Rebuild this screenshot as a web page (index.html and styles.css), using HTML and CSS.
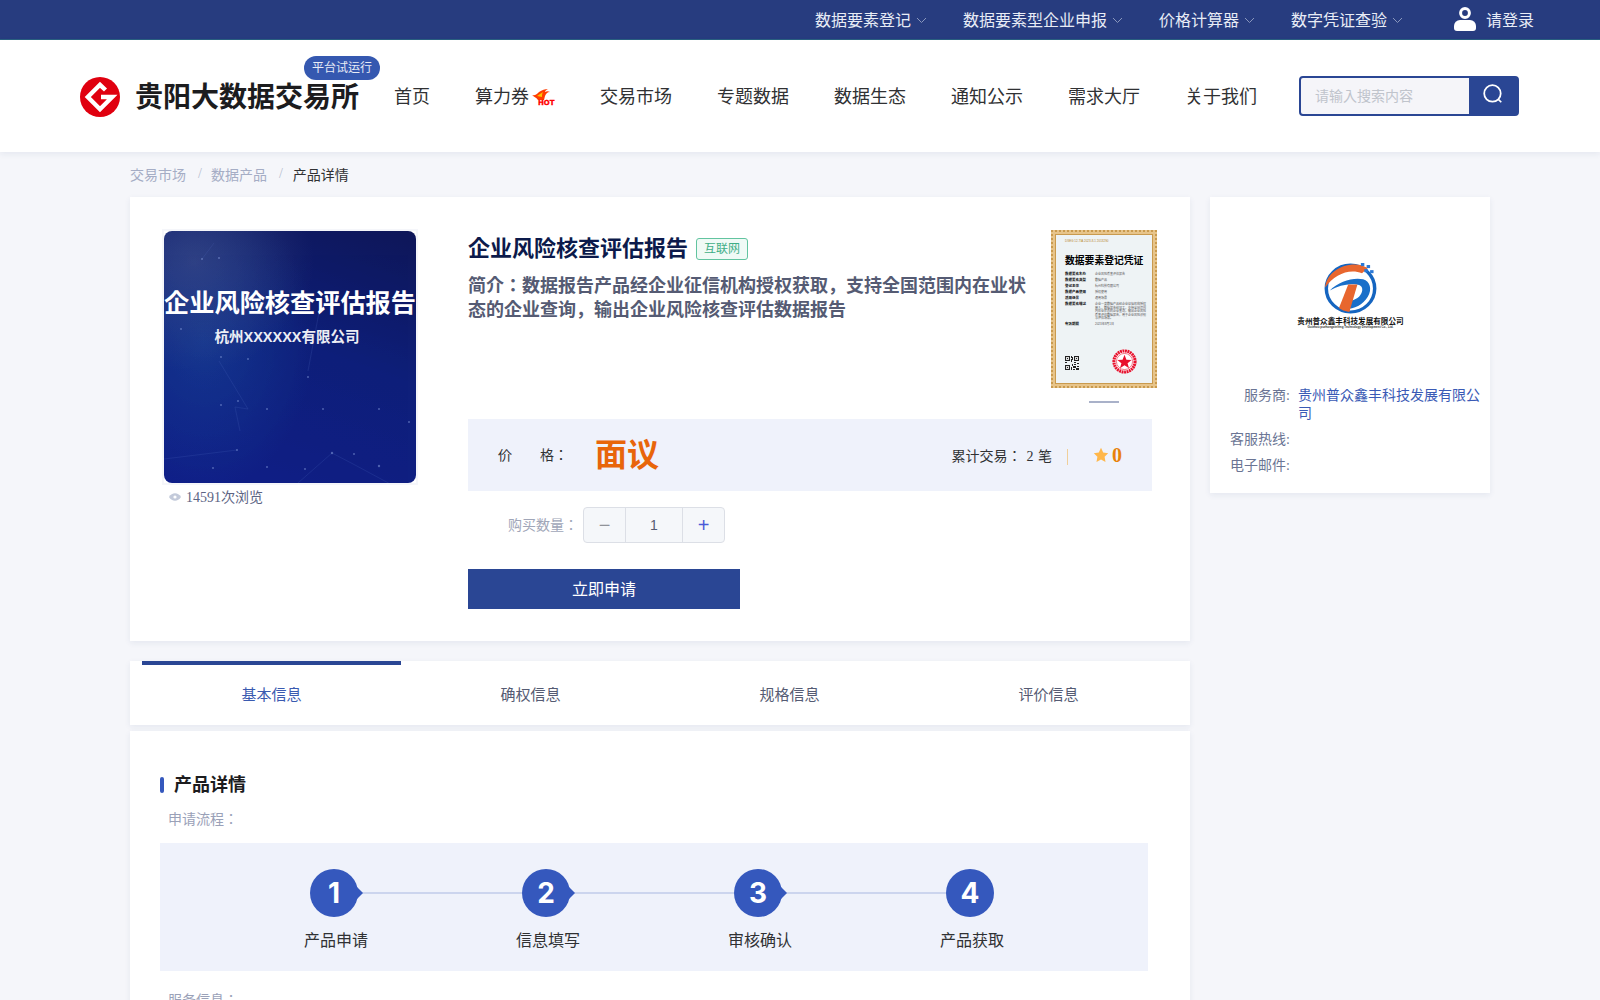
FILE: index.html
```html
<!DOCTYPE html>
<html lang="en">

<head>
    <meta charset="UTF-8">
    <title>企业风险核查评估报告 - 贵阳大数据交易所</title>
    <link rel="stylesheet" href="styles.css">
</head>

<body>

    <!-- 顶部栏 -->
    <div class="topbar">
        <a class="top-item">数据要素登记<svg class="chevron" viewBox="0 0 11 6"><path d="M1 1l4.5 4.5L10 1"/></svg></a>
        <a class="top-item">数据要素型企业申报<svg class="chevron" viewBox="0 0 11 6"><path d="M1 1l4.5 4.5L10 1"/></svg></a>
        <a class="top-item">价格计算器<svg class="chevron" viewBox="0 0 11 6"><path d="M1 1l4.5 4.5L10 1"/></svg></a>
        <a class="top-item">数字凭证查验<svg class="chevron" viewBox="0 0 11 6"><path d="M1 1l4.5 4.5L10 1"/></svg></a>
        <a class="top-login">
            <svg class="user-icon" viewBox="0 0 22 24">
                <circle cx="11" cy="6" r="4.4" fill="none" stroke="#fff" stroke-width="3"/>
                <path d="M0 19a6 6 0 0 1 6-6h10a6 6 0 0 1 6 6v2a3 3 0 0 1-3 3H3a3 3 0 0 1-3-3z" fill="#fff"/>
            </svg>
            请登录
        </a>
    </div>

    <!-- 导航 -->
    <header class="header">
        <svg class="logo" viewBox="0 0 40 40">
            <circle cx="20" cy="20" r="20" fill="#e0000f"/>
            <path d="M25.500 13L20 7.800 7.800 20 20 32.200 32.200 20H21" fill="none" stroke="#fff" stroke-width="4.400"/>
        </svg>
        <div class="brand">贵阳大数据交易所<span class="badge">平台试运行</span></div>
        <nav class="nav">
            <a>首页</a>
            <a class="nav-hot">算力券
                <span class="hot">
                    <svg viewBox="0 0 18 11"><path d="M0 6c3 1 5-1 7-3 3-2 6-3 9-3-2 1-3 2-3 3 2-1 3-1 5 0-3 0-4 2-5 4l-1 4H6C4 8 2 8 0 6z" fill="#ff3c00"/><path d="M5 7c2-1 4-3 6-4-1 2-1 3-1 5z" fill="#ffc400"/></svg>
                    <b>HOT</b>
                </span>
            </a>
            <a>交易市场</a>
            <a>专题数据</a>
            <a>数据生态</a>
            <a>通知公示</a>
            <a>需求大厅</a>
            <a>关于我们</a>
        </nav>
        <div class="search">
            <div class="search-input">请输入搜索内容</div>
            <div class="search-btn">
                <svg viewBox="0 0 20 20"><circle cx="9.500" cy="9.500" r="7.500"/><path d="M15 15l2.500 2.500"/></svg>
            </div>
        </div>
    </header>

    <div class="wrap">
        <div class="crumbs">
            <a>交易市场</a><i>/</i><a>数据产品</a><i>/</i><span>产品详情</span>
        </div>

        <div class="columns">
            <div class="main-col">

                <!-- 产品信息 -->
                <section class="product card">
                    <div class="cover-col">
                        <div class="cover">
                            <div class="cover-img">
                                <svg class="cover-net" viewBox="0 0 252 252">
                                    <g stroke="#4f6bc0" stroke-width=".5" opacity=".4" fill="none">
                                        <path d="M55 130L84 178 71 176 76 200"/>
                                        <path d="M0 228l73-9"/>
                                        <path d="M134 252l34-30 23 12 52 28"/>
                                        <path d="M144 140l12-64"/>
                                        <path d="M50 12l-12 16"/>
                                    </g>
                                    <g fill="#8da3e0" opacity=".5">
                                        <circle cx="38" cy="28" r="1"/><circle cx="55" cy="27" r="1"/><circle cx="17" cy="98" r="1"/>
                                        <circle cx="57" cy="126" r="1"/><circle cx="84" cy="128" r="1"/><circle cx="144" cy="146" r="1"/>
                                        <circle cx="57" cy="174" r="1"/><circle cx="74" cy="170" r="1"/><circle cx="103" cy="178" r="1"/>
                                        <circle cx="159" cy="178" r="1"/><circle cx="215" cy="178" r="1"/><circle cx="245" cy="191" r="1"/>
                                        <circle cx="73" cy="219" r="1"/><circle cx="168" cy="222" r="1.200"/><circle cx="190" cy="223" r="1"/>
                                        <circle cx="215" cy="235" r="1.200"/><circle cx="141" cy="238" r="1"/><circle cx="103" cy="236" r="1"/>
                                        <circle cx="49" cy="237" r="1"/>
                                    </g>
                                </svg>
                                <div class="cover-title">企业风险核查评估报告</div>
                                <div class="cover-sub">杭州XXXXXX有限公司</div>
                            </div>
                        </div>
                        <div class="views">
                            <svg viewBox="0 0 12 8"><path d="M0 4c3-5 9-5 12 0-3 5-9 5-12 0z" fill="#c3cada"/><circle cx="6" cy="4" r="1.600" fill="#fff"/></svg>
                            14591次浏览
                        </div>
                    </div>

                    <div class="info-col">
                        <div class="info-top">
                            <div class="info-text">
                                <div class="title-row">
                                    <h1>企业风险核查评估报告</h1>
                                    <span class="tag">互联网</span>
                                </div>
                                <p class="desc">简介：数据报告产品经企业征信机构授权获取，支持全国范围内在业状态的企业查询，输出企业风险核查评估数据报告</p>
                            </div>
                            <div class="cert-col">
                                <div class="cert">
                                    <div class="cert-in">
                                        <div class="cert-no">DSEG 12-TIA 2023-8-1 2013290</div>
                                        <div class="cert-title">数据要素登记凭证</div>
                                        <div class="cert-row"><b>数据要素名称</b><span>企业风险核查评估报告</span></div>
                                        <div class="cert-row"><b>数据要素类型</b><span>数据产品</span></div>
                                        <div class="cert-row"><b>登记主体</b><span>杭州科技有限公司</span></div>
                                        <div class="cert-row"><b>数据产品使用</b><span>授权使用</span></div>
                                        <div class="cert-row"><b>适用场景</b><span>通用场景</span></div>
                                        <div class="cert-row"><b>数据要素描述</b><span>企业一类数据产品经企业征信机构授权接入，数据报告经加工，支持全国范围内在业状态的企业查询，输出企业风险核查评估数据报告，用于企业风险识别与评估场景。</span></div>
                                        <div class="cert-row"><b>有效期限</b><span>2023年8月1日</span></div>
                                        <div class="cert-foot">
                                            <svg class="cert-qr" viewBox="0 0 15 15" shape-rendering="crispEdges">
                                                <path d="M0 0h5v5H0zM10 0h5v5h-5zM0 10h5v5H0zM6 0h1v2H6zM8 1h1v3H8zM6 3h1v3H6zM6 7h3v1H6zM0 6h2v1H0zM3 7h2v1H3zM10 6h2v2h-2zM13 7h2v2h-2zM7 9h2v2H7zM10 9h2v1h-2zM6 12h2v3H6zM9 11h3v2H9zM13 11h2v1h-2zM9 14h2v1H9zM12 13h3v2h-3z" fill="#222"/>
                                                <path d="M1 1h3v3H1zM11 1h3v3h-3zM1 11h3v3H1z" fill="#ddd"/>
                                                <path d="M2 2h1v1H2zM12 2h1v1h-1zM2 12h1v1H2z" fill="#222"/>
                                            </svg>
                                            <svg class="cert-stamp" viewBox="0 0 26 26">
                                                <circle cx="13" cy="13" r="11" fill="#fff" stroke="#e8112d" stroke-width="3.200" stroke-dasharray="2 .6"/>
                                                <circle cx="13" cy="13" r="8.400" fill="none" stroke="#e8112d" stroke-width=".6"/>
                                                <path d="M13 6l2 5.200 5.400.2-4.200 3.400 1.500 5.200L13 17l-4.700 3 1.500-5.200-4.200-3.400 5.400-.2z" fill="#e8112d"/>
                                            </svg>
                                        </div>
                                    </div>
                                </div>
                                <div class="cert-dash"></div>
                            </div>
                        </div>

                        <div class="price-bar">
                            <div class="price-label"><span>价</span><span>格：</span></div>
                            <div class="price">面议</div>
                            <div class="stats">
                                累计交易：<span class="deal">2 笔</span>
                                <i class="sep"></i>
                                <svg class="star" viewBox="0 0 16 16"><path d="M8 .8l2.200 4.700 5 .7-3.600 3.600.9 5.200L8 12.500 3.500 15l.9-5.200L.8 6.200l5-.7z" fill="#ffb74a"/></svg>
                                <b class="score">0</b>
                            </div>
                        </div>

                        <div class="qty-row">
                            <span class="qty-label">购买数量：</span>
                            <div class="stepper">
                                <span class="step-btn minus">−</span>
                                <span class="step-val">1</span>
                                <span class="step-btn plus">+</span>
                            </div>
                        </div>

                        <button class="apply">立即申请</button>
                    </div>
                </section>

                <!-- 标签页 -->
                <div class="tabs card">
                    <a class="tab active">基本信息</a>
                    <a class="tab">确权信息</a>
                    <a class="tab">规格信息</a>
                    <a class="tab">评价信息</a>
                </div>

                <!-- 产品详情 -->
                <section class="detail card">
                    <h2>产品详情</h2>
                    <div class="field-label">申请流程：</div>
                    <div class="flow">
                        <div class="step"><span class="num">1</span><span class="step-name">产品申请</span></div>
                        <div class="step"><span class="num">2</span><span class="step-name">信息填写</span></div>
                        <div class="step"><span class="num">3</span><span class="step-name">审核确认</span></div>
                        <div class="step"><span class="num">4</span><span class="step-name">产品获取</span></div>
                    </div>
                    <div class="field-label service">服务信息：</div>
                </section>
            </div>

            <!-- 服务商 -->
            <aside class="side card">
                <div class="vendor-logo">
                    <svg viewBox="0 0 46 50" preserveAspectRatio="none">
                        <ellipse cx="23" cy="25" rx="21" ry="23" fill="none" stroke="#1565c0" stroke-width="3"/>
                        <path d="M1 24C2 10 16-1 32 2l6 3-5 5C22 5 9 11 1 24z" fill="#e8662e"/>
                        <path d="M5 27c8-9 20-13 29-11 6 2 8 10 4 17-4 8-12 12-19 12l3-8c5 0 10-4 11-9 1-4-1-7-5-7-8-1-15 1-23 6z" fill="#1a6fc9"/>
                        <path d="M21 21h8l-7 27c-4-1-7-2-9-4z" fill="#e8662e"/>
                        <g fill="#2a78d6"><rect x="32" y="0" width="3" height="3"/><rect x="37" y="2" width="3" height="3"/><rect x="35" y="6" width="3" height="3"/><rect x="40" y="7" width="3" height="3"/></g>
                    </svg>
                    <div class="vendor-cn">贵州普众鑫丰科技发展有限公司</div>
                    <div class="vendor-en">Guizhou puzhongxinfeng Technology Development Co., Ltd.</div>
                </div>
                <dl class="vendor-info">
                    <dt>服务商:</dt><dd class="link">贵州普众鑫丰科技发展有限公司</dd>
                    <dt>客服热线:</dt><dd></dd>
                    <dt>电子邮件:</dt><dd></dd>
                </dl>
            </aside>
        </div>
    </div>

</body>

</html>
```

FILE: styles.css
```css
* {
    box-sizing: border-box;
}

body {
    margin: 0;
    background-color: #f5f6fa;
    color: #303133;
    font-family: "Liberation Serif", "Noto Sans CJK JP", serif;
    font-size: 14px;
}

h1,
h2,
p,
dl,
dd {
    margin: 0;
}

.card {
    background-color: #fff;
    box-shadow: 0 2px 6px rgba(40, 60, 120, 0.08);
}

/* 顶部栏 */
.topbar {
    height: 40px;
    padding-right: 66px;
    padding-bottom: 1px;
    display: flex;
    justify-content: flex-end;
    align-items: center;
    background-color: #273c7f;
    border-bottom: 1px solid #2a6080;
    color: #fff;
    font-size: 16px;
}

.top-item {
    display: flex;
    align-items: center;
    margin-right: 36px;
    color: #e8ecf6;
}

.chevron {
    width: 11px;
    height: 6px;
    margin-left: 5px;
    margin-top: 2px;
    fill: none;
    stroke: #8a97bd;
    stroke-width: 1;
}

.top-login {
    display: flex;
    align-items: center;
    margin-left: 15px;
    color: #e8ecf6;
}

.user-icon {
    width: 22px;
    height: 24px;
    margin-right: 10px;
}

/* 导航 */
.header {
    height: 112px;
    padding-left: 80px;
    display: flex;
    align-items: center;
    background-color: #fff;
    box-shadow: 0 2px 6px rgba(40, 60, 120, 0.08);
    position: relative;
}

.logo {
    width: 40px;
    height: 40px;
    margin-top: 2px;
}

.brand {
    position: relative;
    margin-left: 15px;
    font-size: 28px;
    font-weight: bold;
    color: #1c1c1e;
    line-height: 40px;
    margin-top: 3px;
}

.badge {
    position: absolute;
    left: 169px;
    top: -22px;
    width: 76px;
    height: 24px;
    border-radius: 12px;
    background-color: #3558b0;
    color: #e8ecf6;
    font-size: 12px;
    font-weight: normal;
    line-height: 24px;
    text-align: center;
}

.nav {
    display: flex;
    gap: 45px;
    margin-left: 35px;
    margin-top: -2px;
    font-size: 18px;
    color: #303133;
}

.nav-hot {
    display: flex;
    align-items: center;
}

.hot {
    position: relative;
    width: 26px;
    height: 20px;
}

.hot svg {
    position: absolute;
    left: 3px;
    top: 4px;
    width: 18px;
    height: 11px;
}

.hot b {
    position: absolute;
    left: 9px;
    top: 14px;
    color: #f00;
    font-family: "DejaVu Sans", sans-serif;
    font-size: 7px;
    line-height: 8px;
    -webkit-text-stroke: 0.3px #f00;
}

.search {
    display: flex;
    width: 220px;
    height: 40px;
    margin-left: 42px;
    border: 2px solid #2a4694;
    border-radius: 4px;
    background-color: #2a4694;
    overflow: hidden;
}

.search-input {
    flex: 1;
    padding-left: 14px;
    background-color: #f5f5f9;
    color: #c0c4cc;
    line-height: 38px;
}

.search-btn {
    width: 48px;
    display: flex;
    justify-content: center;
    align-items: center;
}

.search-btn svg {
    width: 22px;
    height: 22px;
    margin-top: -5px;
    fill: none;
    stroke: #fff;
    stroke-width: 1.600;
}

/* 内容 */
.wrap {
    width: 1360px;
    margin-left: 130px;
}

.crumbs {
    height: 45px;
    padding-bottom: 2px;
    display: flex;
    align-items: center;
    color: #a5adc5;
}

.crumbs i {
    margin: 0 9px 0 12px;
    font-style: normal;
    color: #b8bed0;
}

.crumbs span {
    margin-left: 1px;
    color: #303133;
}

.columns {
    display: flex;
    align-items: flex-start;
    gap: 20px;
}

.main-col {
    width: 1060px;
}

/* 产品信息 */
.product {
    display: flex;
    height: 444px;
    padding: 32px;
}

.cover-col {
    width: 256px;
    margin-right: 50px;
}

.cover {
    width: 256px;
    height: 256px;
    border: 2px solid #f5f6fa;
}

.cover-img {
    position: relative;
    height: 100%;
    padding-top: 57px;
    border-radius: 8px;
    overflow: hidden;
    background:
        radial-gradient(ellipse 120px 110px at 30px 30px, rgba(70, 85, 140, 0.55), transparent),
        radial-gradient(ellipse 110px 150px at 40px 110px, rgba(30, 90, 170, 0.4), transparent),
        linear-gradient(200deg, #0e1658 0%, #0e1f7a 45%, #101f88 100%);
    color: #fff;
    text-align: center;
    font-family: "Liberation Sans", "Noto Sans CJK JP", sans-serif;
    font-weight: bold;
}

.cover-net {
    position: absolute;
    left: 0;
    top: 0;
    width: 100%;
    height: 100%;
}

.cover-title {
    position: relative;
    font-size: 25.200px;
    line-height: 30px;
    white-space: nowrap;
}

.cover-sub {
    position: relative;
    margin-top: 9px;
    padding-right: 6px;
    font-size: 14.500px;
    line-height: 20px;
    opacity: 0.92;
}

.views {
    height: 22px;
    padding-left: 7px;
    display: flex;
    align-items: center;
    color: #5c6483;
}

.views svg {
    width: 12px;
    height: 8px;
    margin-right: 5px;
    margin-top: 2px;
}

.info-col {
    width: 689px;
}

.info-top {
    display: flex;
    height: 190px;
}

.info-text {
    width: 558px;
}

.title-row {
    display: flex;
    align-items: center;
    height: 40px;
}

h1 {
    font-size: 22px;
    line-height: 38px;
    color: #0c1a4b;
}

.tag {
    margin-left: 8px;
    padding: 0 7px;
    height: 22px;
    border: 1px solid #62c4a0;
    border-radius: 3px;
    background-color: #f0faf6;
    color: #3fae86;
    font-size: 12px;
    line-height: 20px;
}

.desc {
    margin-top: 5px;
    font-size: 18px;
    font-weight: bold;
    line-height: 24px;
    color: #555b73;
}

.cert-col {
    width: 106px;
    margin-left: 25px;
    margin-top: 1px;
}

.cert {
    width: 106px;
    height: 158px;
    padding: 2px;
    border: 2px dotted #c99a4e;
    background-color: #e7c48a;
}

.cert-in {
    height: 100%;
    padding: 4px 6px 0 9px;
    border: 1px solid #c99a4e;
    background-color: #eef3f5;
    color: #222;
    font-family: "Liberation Sans", "Noto Sans CJK JP", sans-serif;
}

.cert-no {
    font-size: 3px;
    line-height: 4px;
    color: #b8862f;
}

.cert-title {
    margin: 12px 0 7px 0;
    font-size: 9.800px;
    font-weight: bold;
    line-height: 11px;
    white-space: nowrap;
    color: #000;
}

.cert-row {
    display: flex;
    margin-bottom: 2.400px;
    font-size: 3px;
    line-height: 3.600px;
    color: #555;
}

.cert-row b {
    flex: none;
    width: 30px;
    color: #111;
    font-size: 3.500px;
}

.cert-foot {
    display: flex;
    justify-content: space-between;
    align-items: flex-end;
    margin-top: 22px;
    padding-right: 9px;
}

.cert-qr {
    width: 14px;
    height: 14px;
    margin-bottom: 4px;
}

.cert-stamp {
    width: 25px;
    height: 25px;
}

.cert-dash {
    width: 30px;
    height: 2px;
    margin: 13px 0 0 38px;
    background-color: #a9b1c9;
}

.price-bar {
    display: flex;
    align-items: center;
    width: 684px;
    height: 72px;
    padding: 0 30px 0 30px;
    background-color: #eff2fb;
}

.price-label {
    display: flex;
    justify-content: space-between;
    width: 70px;
    margin-right: 27px;
    margin-top: -3px;
}

.price {
    font-size: 32px;
    font-weight: bold;
    color: #e8650a;
    line-height: 40px;
}

.stats {
    display: flex;
    align-items: center;
    margin-left: auto;
}

.deal {
    margin-left: 5px;
    word-spacing: 1px;
}

.sep {
    width: 1px;
    height: 16px;
    margin: 4px 25px 0 15px;
    background-color: #f0cf9a;
}

.star {
    width: 16px;
    height: 16px;
}

.score {
    margin-left: 3px;
    font-size: 20px;
    color: #e8820a;
}

.qty-row {
    display: flex;
    align-items: center;
    margin-top: 16px;
    padding-left: 40px;
}

.qty-label {
    margin-top: -2px;
    color: #a0a6b8;
}

.stepper {
    display: flex;
    width: 142px;
    height: 36px;
    margin-left: 5px;
    border: 1px solid #dcdfe6;
    border-radius: 4px;
    background-color: #f5f7fa;
    font-family: "Liberation Sans", sans-serif;
    line-height: 34px;
    text-align: center;
}

.step-btn {
    width: 41px;
    font-size: 20px;
}

.minus {
    color: #909399;
}

.plus {
    color: #4a5bd8;
}

.step-val {
    flex: 1;
    border-left: 1px solid #dcdfe6;
    border-right: 1px solid #dcdfe6;
    color: #555b73;
}

.apply {
    display: block;
    width: 272px;
    height: 40px;
    margin-top: 26px;
    padding-bottom: 3px;
    border: none;
    background-color: #2a4694;
    color: #fff;
    font-family: inherit;
    font-size: 16px;
}

/* 标签页 */
.tabs {
    display: flex;
    height: 64px;
    margin-top: 20px;
    padding: 0 12px;
}

.tab {
    width: 259px;
    border-top: 4px solid transparent;
    color: #555b73;
    font-size: 15px;
    line-height: 60px;
    text-align: center;
}

.tab.active {
    border-top-color: #2a4694;
    color: #3a5ab0;
}

/* 产品详情 */
.detail {
    margin-top: 6px;
    padding: 41px 30px 0;
    height: 300px;
    overflow: hidden;
}

h2 {
    display: flex;
    align-items: center;
    font-size: 18px;
    line-height: 26px;
    color: #1c1c1e;
}

h2::before {
    content: "";
    width: 4px;
    height: 16px;
    margin-right: 10px;
    border-radius: 2px;
    background-color: #3558bd;
}

.field-label {
    margin-top: 12px;
    padding-left: 8px;
    color: #9aa1b8;
    line-height: 20px;
}

.field-label.service {
    margin-top: 20px;
}

.flow {
    display: flex;
    width: 988px;
    height: 128px;
    margin-top: 13px;
    padding: 26px 0 0 68px;
    background-color: #eff2fb;
}

.step {
    position: relative;
    width: 212px;
    display: flex;
    flex-direction: column;
    align-items: center;
}

.num {
    width: 48px;
    height: 48px;
    border-radius: 50%;
    background-color: #3558bd;
    color: #fff;
    font-family: "Inter", sans-serif;
    font-size: 28px;
    font-weight: 700;
    line-height: 48px;
    text-align: center;
}

/* 圆圈右侧的小箭头和连接线 */
.step:not(:last-child) .num::before {
    content: "";
    position: absolute;
    z-index: 1;
    left: 129px;
    top: 18px;
    border-left: 6px solid #3558bd;
    border-top: 6px solid transparent;
    border-bottom: 6px solid transparent;
}

.step:not(:last-child)::after {
    content: "";
    position: absolute;
    left: 130px;
    top: 23px;
    width: 164px;
    height: 2px;
    background-color: #ccd5ee;
}

.step-name {
    margin-top: 12px;
    padding-left: 4px;
    font-size: 16px;
    line-height: 24px;
    color: #303133;
}

/* 服务商 */
.side {
    width: 280px;
    height: 296px;
    padding: 66px 10px 0 0;
}

.vendor-logo {
    height: 124px;
    margin-left: 87px;
    width: 107px;
    text-align: center;
    font-family: "Liberation Sans", "Noto Sans CJK JP", sans-serif;
}

.vendor-logo svg {
    display: block;
    width: 53px;
    height: 51px;
    margin: 0 auto 4px;
}

.vendor-cn {
    font-size: 7.600px;
    font-weight: bold;
    line-height: 8px;
    color: #111;
    white-space: nowrap;
}

.vendor-en {
    font-size: 3px;
    font-weight: bold;
    line-height: 3px;
    color: #333;
    white-space: nowrap;
}

.vendor-info {
    display: grid;
    grid-template-columns: 80px 1fr;
    column-gap: 8px;
    row-gap: 8px;
    line-height: 18px;
    color: #6b7594;
}

.vendor-info dt {
    text-align: right;
}

.vendor-info .link {
    color: #3a5ab5;
}
```
